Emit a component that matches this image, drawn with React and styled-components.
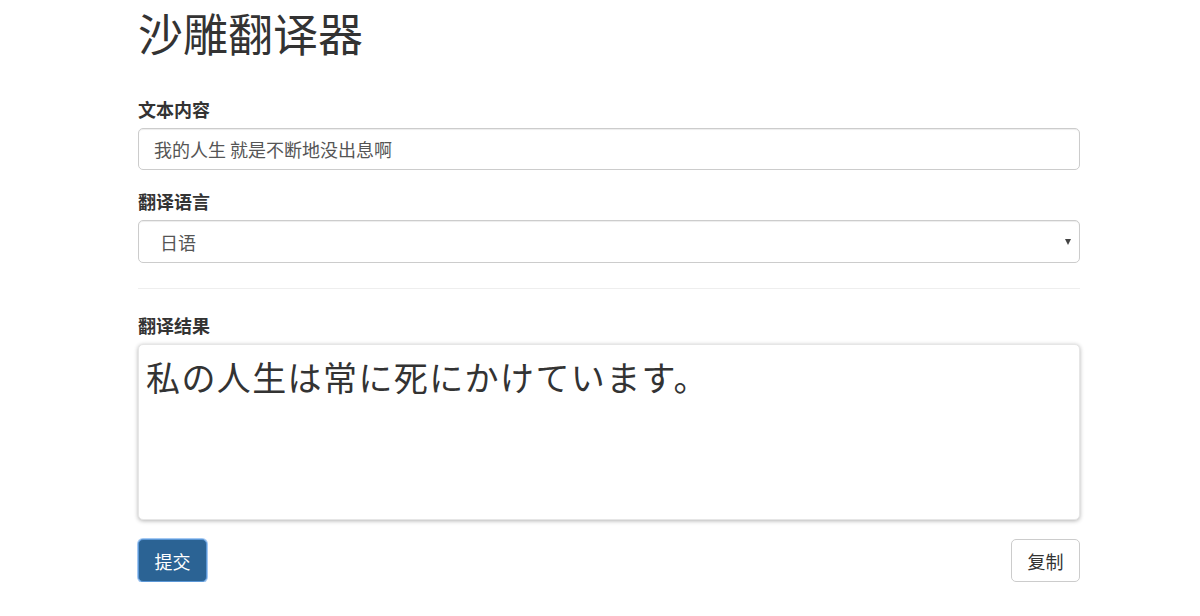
import React, { useState } from "react";
import styled, { createGlobalStyle } from "styled-components";

const Global = createGlobalStyle`
  html, body { margin: 0; padding: 0; background: #fff; }
  body {
    font-family: "Noto Sans CJK SC", "Noto Sans", "Liberation Sans", sans-serif;
    color: #333;
  }
  * { box-sizing: border-box; }
`;

const Page = styled.div`
  width: 1200px;
  padding: 0 120px 0 138px;
`;

const Container = styled.div`
  width: 942px;
  display: flex;
  flex-direction: column;
`;

const Title = styled.h1`
  margin: 0 0 31px;
  height: 66px;
  font-size: 45px;
  line-height: 66px;
  font-weight: 400;
  color: #333;
`;

const Group = styled.div`
  display: flex;
  flex-direction: column;
  margin-bottom: ${(p) => p.$mb ?? 19}px;
`;

const Label = styled.label`
  display: block;
  font-size: 18px;
  line-height: 25px;
  font-weight: 700;
  color: #333;
  margin-bottom: 6px;
`;

const Input = styled.input`
  width: 100%;
  height: 42px;
  padding: 0 15px;
  border: 1px solid #ccc;
  border-radius: 5px;
  font-family: "Noto Sans CJK SC", sans-serif;
  font-size: 18px;
  color: #555;
  box-shadow: inset 0 1px 1px rgba(0, 0, 0, 0.075);
  outline: none;
`;

const SelectWrap = styled.div`
  position: relative;
  width: 100%;
`;

const Select = styled.select`
  width: 100%;
  height: 43px;
  padding: 0 21px;
  border: 1px solid #ccc;
  border-radius: 5px;
  background: #fff;
  font-family: "Noto Sans CJK SC", sans-serif;
  font-size: 18px;
  color: #555;
  appearance: none;
  -webkit-appearance: none;
  box-shadow: inset 0 1px 1px rgba(0, 0, 0, 0.075);
  outline: none;
`;

const Arrow = styled.span`
  position: absolute;
  right: 9px;
  top: 19px;
  width: 0;
  height: 0;
  border-left: 3.5px solid transparent;
  border-right: 3.5px solid transparent;
  border-top: 6px solid #444;
  pointer-events: none;
`;

const Rule = styled.hr`
  margin: 0 0 24px;
  border: 0;
  border-top: 1px solid #eee;
`;

const Result = styled.textarea`
  width: 100%;
  height: 176px;
  padding: 10px 7px;
  border: 1px solid #e6e6e6;
  border-radius: 5px;
  box-shadow: 0 1px 4px rgba(0, 0, 0, 0.3);
  font-family: "Noto Sans CJK JP", sans-serif;
  font-size: 34px;
  letter-spacing: 1.4px;
  line-height: 44px;
  color: #333;
  resize: none;
  outline: none;
`;

const Actions = styled.div`
  display: flex;
  justify-content: space-between;
  align-items: center;
`;

const Button = styled.button`
  height: 43px;
  width: 69px;
  border-radius: 5px;
  font-family: "Noto Sans CJK SC", sans-serif;
  font-size: 18px;
  cursor: pointer;
  border: 1px solid ${(p) => (p.$primary ? "#5b97d6" : "#ccc")};
  background: ${(p) => (p.$primary ? "#2b6394" : "#fff")};
  color: ${(p) => (p.$primary ? "#fff" : "#333")};
  box-shadow: ${(p) => (p.$primary ? "0 0 0 1px rgba(102,163,233,0.6)" : "none")};
`;

export default function App() {
  const [text, setText] = useState("我的人生 就是不断地没出息啊");
  const [lang, setLang] = useState("ja");
  return (
    <Page>
      <Global />
      <Container>
        <Title>沙雕翻译器</Title>
        <Group>
          <Label>文本内容</Label>
          <Input value={text} onChange={(e) => setText(e.target.value)} />
        </Group>
        <Group $mb={25}>
          <Label>翻译语言</Label>
          <SelectWrap>
            <Select value={lang} onChange={(e) => setLang(e.target.value)}>
              <option value="ja">日语</option>
              <option value="en">英语</option>
            </Select>
            <Arrow />
          </SelectWrap>
        </Group>
        <Rule />
        <Group>
          <Label>翻译结果</Label>
          <Result readOnly value="私の人生は常に死にかけています。" />
        </Group>
        <Actions>
          <Button $primary>提交</Button>
          <Button>复制</Button>
        </Actions>
      </Container>
    </Page>
  );
}
